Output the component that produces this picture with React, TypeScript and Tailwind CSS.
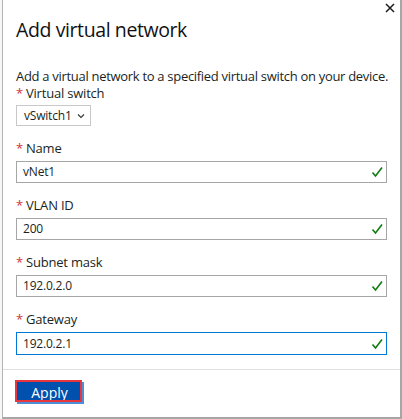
import React from "react";

const font = { fontFamily: '"Segoe UI", "Open Sans", "Noto Sans", sans-serif' };

function Check() {
  return (
    <svg width="12" height="12" viewBox="0 0 12 12" className="shrink-0">
      <path d="M1.5 6.5 L4.5 10 L11 1.5" fill="none" stroke="#107c10" strokeWidth="1.6" />
    </svg>
  );
}

function Label({ text }: { text: string }) {
  return (
    <div className="h-[18px] flex items-center text-[13px] leading-[18px] tracking-[-0.2px] text-[#201f1e]">
      <span className="text-[#d13438] mr-[3px] text-[13px]">*</span>
      {text}
    </div>
  );
}

function Field({ label, value, focused }: { label: string; value: string; focused?: boolean }) {
  return (
    <div className="mt-[13px]">
      <Label text={label} />
      <div
        className={
          focused
            ? "mt-[4px] h-[23px] flex items-center justify-between border border-[#0078d4] pl-[6px] pr-[3px] text-[12px] tracking-[-0.2px] text-[#201f1e]"
            : "mt-[4px] h-[22px] flex items-center justify-between border border-[#a6a6a6] pl-[6px] pr-[3px] text-[12px] tracking-[-0.2px] text-[#201f1e]"
        }
      >
        <span>{value}</span>
        <Check />
      </div>
    </div>
  );
}

export default function App() {
  return (
    <div className="w-[402px] h-[419px] flex bg-[#f4f4f4] overflow-hidden" style={font}>
      <div className="w-[2px] h-full shrink-0 bg-[#f6f6f6]" />
      <div className="relative w-[400px] min-w-0 shrink-0 h-[419px] bg-white border-l border-[#b4b4b4] border-r-2 border-r-[#a6a6a6] border-b-2 border-b-[#a6a6a6] flex flex-col">
        <button className="absolute top-[1px] right-[3px] w-[14px] h-[14px] flex items-center justify-center">
          <svg width="10" height="10" viewBox="0 0 10 10">
            <path d="M1 1 L9 9 M9 1 L1 9" stroke="#1b1b1b" strokeWidth="1.5" />
          </svg>
        </button>

        <div className="pl-[13px] pr-[13px]">
          <div className="pt-[16px] h-[45px] text-[19.5px] leading-[28px] tracking-[-0.4px] text-[#111]">Add virtual network</div>

          <div className="mt-[23px] h-[17px] text-[13px] leading-[17px] tracking-[-0.3px] text-[#201f1e] whitespace-nowrap">
            Add a virtual network to a specified virtual switch on your device.
          </div>
          <div className="h-[17px] flex items-center text-[13px] leading-[17px] tracking-[-0.2px] text-[#201f1e]">
            <span className="text-[#d13438] mr-[3px]">*</span>
            Virtual switch
          </div>
          <div className="mt-[3px] w-[75px] h-[21px] border border-[#c8c8c8] flex items-center pl-[7px] text-[12px] tracking-[-0.2px] text-[#201f1e]">
            vSwitch1
            <svg width="8" height="6" viewBox="0 0 8 6" className="ml-[5px]">
              <path d="M1 1.5 L4 4.5 L7 1.5" fill="none" stroke="#333" strokeWidth="1.1" />
            </svg>
          </div>

          <Field label="Name" value="vNet1" />
          <Field label="VLAN ID" value="200" />
          <Field label="Subnet mask" value="192.0.2.0" />
          <Field label="Gateway" value="192.0.2.1" focused />
        </div>

        <div className="mt-[14px] border-t border-[#e1e1e1] flex-1">
          <div className="pl-[14px] pt-[12px]">
            <div className="relative w-[67px] h-[22px] bg-[#4f8fd6]">
              <div className="absolute left-0 top-0 w-[65px] h-[20px] bg-[#0050ae] flex items-center justify-center text-white text-[14px]">
                Apply
              </div>
              <div className="absolute left-[-2px] top-[-2px] w-[67px] h-[22px] border-2 border-[#e8363e]" />
            </div>
          </div>
        </div>
      </div>
    </div>
  );
}
